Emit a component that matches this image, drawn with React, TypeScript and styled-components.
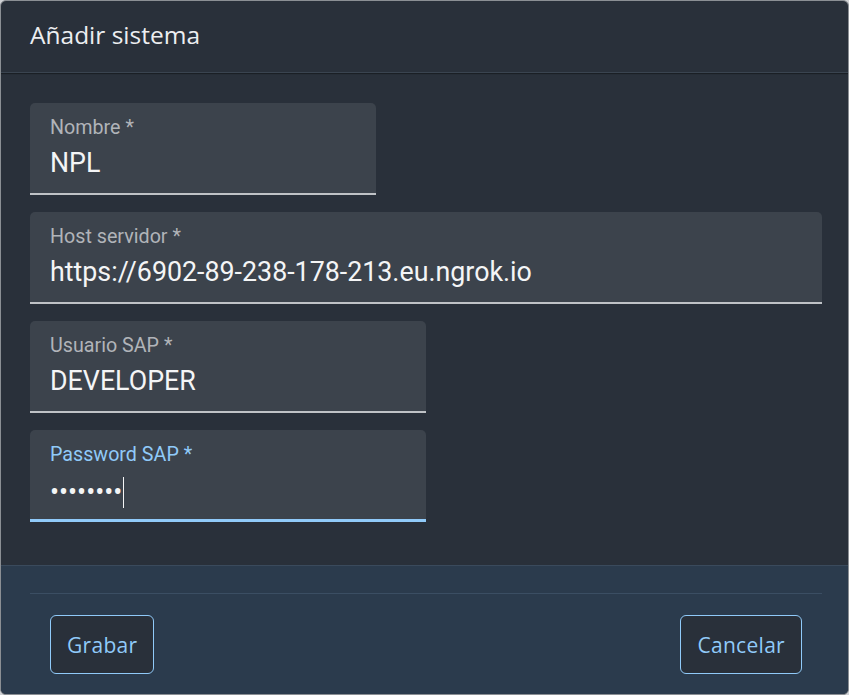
import React from "react";
import styled, { createGlobalStyle } from "styled-components";

const Global = createGlobalStyle`
  html, body { margin: 0; padding: 0; background: #cfd1d4; }
  * { box-sizing: border-box; }
`;

const Dialog = styled.div`
  width: 849px;
  height: 695px;
  border: 1px solid #8b8f94;
  border-radius: 6px;
  overflow: hidden;
  background: #29303a;
  display: flex;
  flex-direction: column;
`;

const Header = styled.div`
  height: 72px;
  padding: 22px 29px 0;
  border-bottom: 1px solid #3a4450;
  box-shadow: 0 1px 1px rgba(0, 0, 0, 0.35);
  flex: none;
`;

const Title = styled.h2`
  margin: 0;
  font-family: "Open Sans", "Noto Sans", sans-serif;
  font-weight: 500;
  font-size: 24.5px;
  line-height: 1;
  color: #eceef1;
`;

const Content = styled.div`
  height: 492px;
  flex: none;
  padding: 30px 29px 0;
  display: flex;
  flex-direction: column;
  align-items: flex-start;
  gap: 17px;
`;

const Field = styled.div<{ $w: number; $focused?: boolean }>`
  width: ${(p) => p.$w}px;
  height: 92px;
  background: #3c434c;
  border-radius: 5px 5px 0 0;
  border-bottom: ${(p) => (p.$focused ? "3px solid #90caf9" : "2px solid #bfc2c6")};
  padding: 15px 20px 0;
  display: flex;
  flex-direction: column;
  gap: 12px;
`;

const Label = styled.div<{ $focused?: boolean }>`
  font-family: Roboto, "Liberation Sans", sans-serif;
  font-size: 19.7px;
  line-height: 20px;
  color: ${(p) => (p.$focused ? "#90caf9" : "#b1b4b9")};
`;

const Value = styled.div`
  font-family: Roboto, "Liberation Sans", sans-serif;
  font-size: 26.8px;
  line-height: 26.5px;
  color: #f4f5f6;
  white-space: nowrap;
  display: flex;
  align-items: center;
`;

const Caret = styled.span`
  display: inline-block;
  width: 1px;
  height: 31px;
  background: #f4f5f6;
  margin-left: 1px;
`;

const Footer = styled.div`
  flex: 1;
  background: #2b3b4d;
  border-top: 1px solid #3a4a5c;
  padding: 27px 26px 0 29px;
  display: flex;
  flex-direction: column;
`;

const Rule = styled.div`
  height: 1px;
  background: #3b4e63;
`;

const Actions = styled.div`
  margin-top: 21px;
  padding: 0 20px;
  display: flex;
  justify-content: space-between;
`;

const Button = styled.button`
  height: 59px;
  padding: 0 16px;
  background: #29303a;
  border: 1px solid #90caf9;
  border-radius: 6px;
  color: #90caf9;
  font-family: "Open Sans", "Noto Sans", sans-serif;
  font-size: 21px;
  letter-spacing: 0.3px;
  display: flex;
  align-items: center;
  cursor: pointer;
`;

const fields = [
  { label: "Nombre *", value: "NPL", w: 346 },
  { label: "Host servidor *", value: "https://6902-89-238-178-213.eu.ngrok.io", w: 792 },
  { label: "Usuario SAP *", value: "DEVELOPER", w: 396 },
];

export default function App() {
  return (
    <>
      <Global />
      <Dialog>
        <Header>
          <Title>Añadir sistema</Title>
        </Header>
        <Content>
          {fields.map((f) => (
            <Field key={f.label} $w={f.w}>
              <Label>{f.label}</Label>
              <Value>{f.value}</Value>
            </Field>
          ))}
          <Field $w={396} $focused>
            <Label $focused>Password SAP *</Label>
            <Value>
              {"••••••••"}
              <Caret />
            </Value>
          </Field>
        </Content>
        <Footer>
          <Rule />
          <Actions>
            <Button>Grabar</Button>
            <Button>Cancelar</Button>
          </Actions>
        </Footer>
      </Dialog>
    </>
  );
}
